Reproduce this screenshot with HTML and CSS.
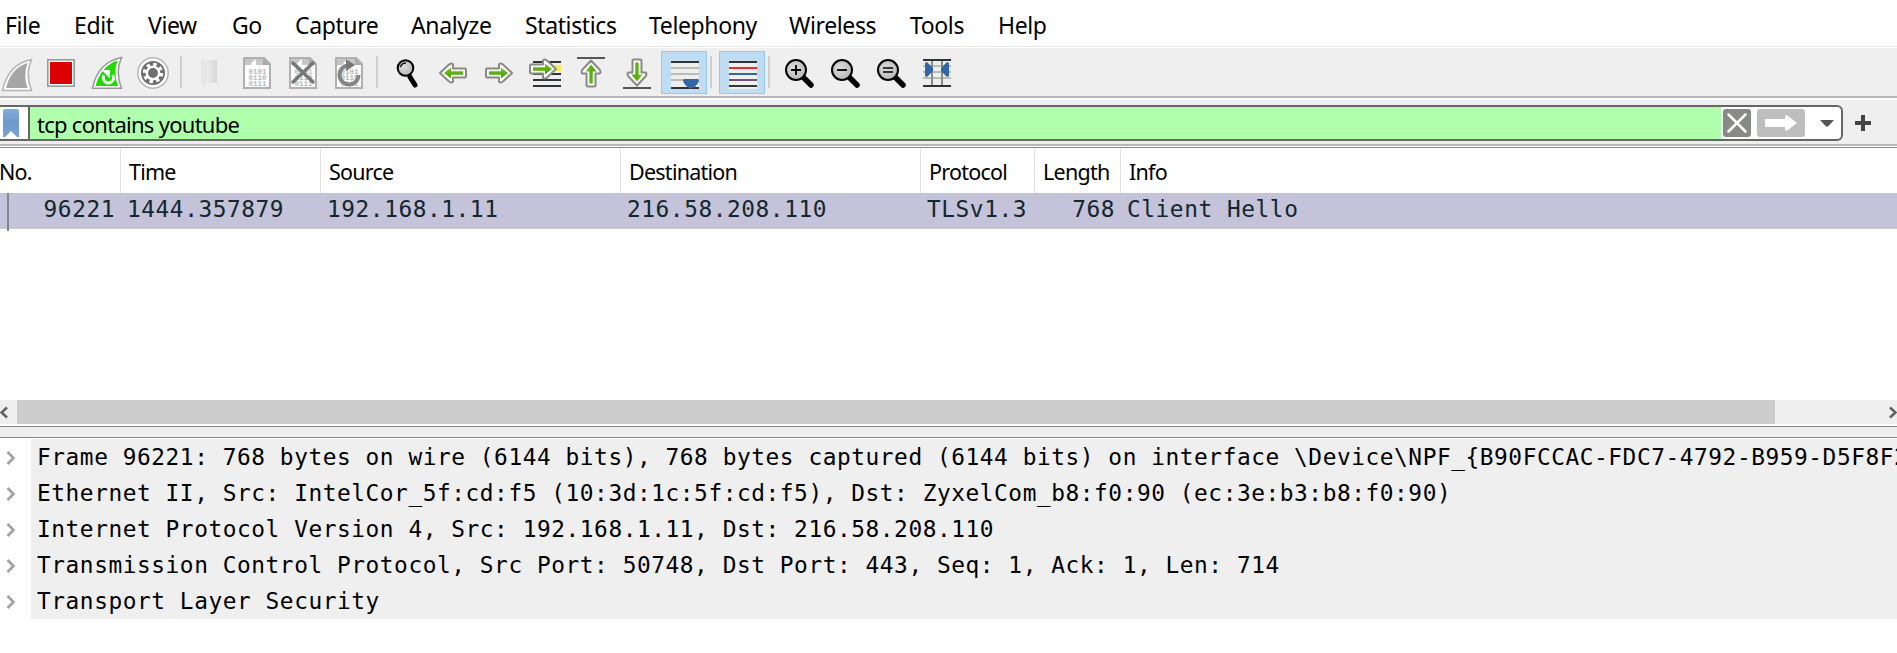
FILE: index.html
```html
<!DOCTYPE html>
<html lang="en">
<head>
<meta charset="utf-8">
<title>Packet capture</title>
<link rel="stylesheet" href="styles.css">
</head>
<body>
<svg class="defs" width="0" height="0">
  <defs>
    <linearGradient id="green" x1="0" y1="0" x2="0" y2="1"><stop offset="0" stop-color="#77c520"/><stop offset="1" stop-color="#459b00"/></linearGradient>
    <linearGradient id="blue" x1="0" y1="0" x2="0" y2="1"><stop offset="0" stop-color="#85acd9"/><stop offset=".5" stop-color="#6d99cc"/><stop offset="1" stop-color="#7aa4d4"/></linearGradient>
    <radialGradient id="lens" cx=".4" cy=".4" r=".6"><stop offset="0" stop-color="#ddd"/><stop offset="1" stop-color="#b8b8b8"/></radialGradient>
    <linearGradient id="folder"><stop offset="0" stop-color="#e6e6e6"/><stop offset=".4" stop-color="#e8e8e8"/><stop offset="1" stop-color="#d4d4d4"/></linearGradient>
    <g id="page">
      <path d="M1 1H21L27 7V31H1Z" fill="#fff" stroke="#b0b0b0" stroke-width="2"/>
      <path d="M2 2H20V8H2Z" fill="#c6c6c6"/><path d="M7 9Q9 4 13 2Q12 6 14 9Z" fill="#fff"/><path d="M20 1V8H27Z" fill="#a9a9a9"/>
      <g class="bits"><text x="5.500" y="16.500">0101</text><text x="5.500" y="22.500">0110</text><text x="5.500" y="28.500">0111</text></g>
    </g>
    <g id="glass">
      <path d="M18 18L26 26" stroke="#000" stroke-width="5.500" stroke-linecap="round"/>
      <circle cx="11" cy="11" r="10" fill="url(#lens)" stroke="#000" stroke-width="2"/>
    </g>
    <g id="arrow">
      <path d="M2 6H14V2Q15 0 18 2L27 10.500L18 19Q15 21 14 19V15H2Q1 15 1 14V7Q1 6 2 6Z" fill="#fff" stroke="#888a85" stroke-width="2" stroke-linejoin="round"/>
      <path d="M4 8.800H16V5L23 10.500L16 16V12.200H4Z" fill="url(#green)"/>
    </g>
  </defs>
</svg>

<nav class="menu">
  <span>File</span><span>Edit</span><span>View</span><span>Go</span><span>Capture</span><span>Analyze</span><span>Statistics</span><span>Telephony</span><span>Wireless</span><span>Tools</span><span>Help</span>
</nav>

<div class="toolbar">
  <svg class="first" viewBox="0 48 38 48"><path d="M2.500 90.500Q8 64 31.500 59.500Q25 74 31.500 90.500Z" fill="#fff" stroke="#b4b4b4" stroke-width="1.500"/><path d="M6 88Q11 68 27.500 63Q23 75 27.500 88Z" fill="#a6a6a6"/></svg>
  <svg viewBox="38 48 46 48"><rect x="47.800" y="59.800" width="26.400" height="26.400" fill="#fff" stroke="#999" stroke-width="1.600"/><rect x="50" y="62" width="22" height="22" fill="#dc0000"/></svg>
  <svg viewBox="84 48 46 48"><path d="M92.500 88.200Q98 62 121.500 57.500Q115 72 121.500 88.200Z" fill="#fff" stroke="#999" stroke-width="1.500"/><path d="M95.500 86Q101 66 117.500 60.500Q113 73 118 86Z" fill="#1edb00"/><path d="M104 75.500A5 5 0 1 0 112.500 75" fill="none" stroke="#fff" stroke-width="2.800"/><path d="M101.500 70H110V78.500Z" fill="#fff"/></svg>
  <svg viewBox="130 48 46 48"><circle cx="153" cy="73" r="15.200" fill="#fff" stroke="#b5b5b5" stroke-width="1.500"/><circle cx="153" cy="73" r="12" fill="#6e6e6e"/><circle cx="153" cy="73" r="8.500" fill="none" stroke="#fff" stroke-width="3.500" stroke-dasharray="3.400 3.275"/><circle cx="153" cy="73" r="6.200" fill="none" stroke="#fff" stroke-width="2.500"/></svg>
  <i class="sep s1"></i>
  <svg viewBox="187 48 46 48"><path d="M201 60H217V82L219 83H206L205 87L201 82Z" fill="url(#folder)"/><path d="M201 60L206 64V83L205 87L201 82Z" fill="#e6e6e6"/></svg>
  <svg viewBox="233 48 46 48"><use href="#page" x="243" y="57"/></svg>
  <svg viewBox="279 48 46 48"><use href="#page" x="289" y="57"/><path d="M293 63L313 82M313 63L293 82" stroke="#777" stroke-width="3.500" stroke-linecap="round"/></svg>
  <svg viewBox="325 48 46 48"><use href="#page" x="335" y="57"/><path d="M348 65.500A9.500 9.500 0 1 0 358.500 75" fill="none" stroke="#858585" stroke-width="4"/><path d="M346 59L355 65L346 71Z" fill="#777"/></svg>
  <i class="sep s2"></i>
  <svg viewBox="384 48 46 48"><path d="M410 77L415 85" stroke="#000" stroke-width="5" stroke-linecap="round"/><path d="M408 72L412 79" stroke="#000" stroke-width="2"/><circle cx="405.500" cy="68" r="7.800" fill="url(#lens)" stroke="#000" stroke-width="2"/><path d="M400.500 67Q401.500 63 406 63" fill="none" stroke="#111" stroke-width="1.400"/></svg>
  <svg viewBox="430 48 46 48"><use href="#arrow" transform="translate(467 62.500) scale(-1 1)"/></svg>
  <svg viewBox="476 48 46 48"><use href="#arrow" transform="translate(485 62.500)"/></svg>
  <svg viewBox="522 48 46 48"><path d="M533 62H561M533 74H561M533 80H561M533 86H561" stroke="#2e3436" stroke-width="2"/><path d="M550 65H561V71H550Z" fill="#fce94f"/><use href="#arrow" transform="translate(529 58.500)"/></svg>
  <svg viewBox="568 48 46 48"><path d="M577 58H605" stroke="#555753" stroke-width="2"/><use href="#arrow" transform="translate(580.500 87.500) rotate(-90)"/></svg>
  <svg viewBox="614 48 46 48"><path d="M623 88H651" stroke="#555753" stroke-width="2"/><use href="#arrow" transform="translate(647.500 58.500) rotate(90)"/></svg>
  <button class="on b1"><svg viewBox="661 48 46 48"><path d="M671 61H699V89H671Z" fill="#eeeeec"/><path d="M671 62H699M671 88H699" stroke="#2e3436" stroke-width="2"/><path d="M671 68H699M671 74H699M671 80H699" stroke="#babdb6" stroke-width="2"/><path d="M684 79H698Q700 80 698 83Q695 88 691 88.500Q687 88 684 83Q682 80 684 79Z" fill="#3465a4"/></svg></button>
  <i class="sep s3"></i>
  <button class="on"><svg viewBox="719 48 46 48"><path d="M729 61H757V89H729Z" fill="#eeeeec"/><path d="M729 62H757" stroke="#2e3436" stroke-width="2"/><path d="M729 68H757" stroke="#ef2929" stroke-width="2"/><path d="M729 74H757" stroke="#3465a4" stroke-width="2"/><path d="M729 80H757" stroke="#75507b" stroke-width="2"/><path d="M729 86H757" stroke="#2e3b36" stroke-width="2"/></svg></button>
  <i class="sep s4"></i>
  <svg viewBox="776 48 46 48"><use href="#glass" x="785" y="59"/><path d="M791 70H801M796 65V75" stroke="#000" stroke-width="1.800"/></svg>
  <svg viewBox="822 48 46 48"><use href="#glass" x="831" y="59"/><path d="M837 70H847" stroke="#000" stroke-width="1.800"/></svg>
  <svg viewBox="868 48 46 48"><use href="#glass" x="877" y="59"/><path d="M883 68H893M883 72H893" stroke="#000" stroke-width="1.700"/></svg>
  <svg viewBox="914 48 46 48"><path d="M923 60H951V86H923Z" fill="#eeeeec"/><path d="M923 66H951M923 72H951M923 78H951" stroke="#babdb6" stroke-width="2"/><path d="M923 60H951M923 86H951" stroke="#2e3436" stroke-width="2"/><path d="M932 61V85M942 61V85" stroke="#888a85" stroke-width="2"/><path d="M925 63L927 62L933 68V71L927 77L925 76ZM949 63L947 62L941 68V71L947 77L949 76Z" fill="#3465a4"/></svg>
</div>

<div class="filterbar">
  <div class="filter">
    <span class="bookmark"><svg width="16" height="28" viewBox="0 0 16 28"><path d="M0 2Q0 0 2 0H14Q16 0 16 2V28H14L8 22L2 28H0Z" fill="url(#blue)"/></svg></span>
    <span class="query">tcp contains youtube</span>
    <span class="actions">
      <svg width="28" height="28" viewBox="0 0 28 28"><rect width="28" height="28" rx="3" fill="#888a85"/><path d="M5.500 5.500L22.500 22.500M22.500 5.500L5.500 22.500" stroke="#fff" stroke-width="2.500" stroke-linecap="round"/></svg>
      <svg width="48" height="28" viewBox="0 0 48 28"><rect width="48" height="28" rx="3" fill="#bebebe"/><path d="M9 10H28V7Q29 5.500 31 7L40 14L31 21Q29 22.500 28 21V18H9Q8 18 8 17V11Q8 10 9 10Z" fill="#fff"/></svg>
      <svg class="drop" width="14" height="7" viewBox="0 0 14 7"><path d="M0 0H14L8 6.500H6Z" fill="#555753"/></svg>
    </span>
  </div>
  <svg class="plus" width="16" height="16" viewBox="0 0 16 16"><path d="M0 8H16M8 0V16" stroke="#444" stroke-width="4"/></svg>
</div>

<section class="packets">
  <div class="row head"><span>No.</span><span>Time</span><span>Source</span><span>Destination</span><span>Protocol</span><span>Length</span><span>Info</span></div>
  <div class="row packet"><span class="num">96221</span><span>1444.357879</span><span>192.168.1.11</span><span>216.58.208.110</span><span>TLSv1.3</span><span class="num">768</span><span>Client Hello</span></div>
</section>

<div class="scroll">
  <svg width="17" height="24" viewBox="0 0 17 24"><path d="M7 7.500L1.500 12.500L7 17.500" fill="none" stroke="#606060" stroke-width="2.500"/></svg>
  <div class="thumb"></div>
  <svg width="10" height="24" viewBox="0 0 10 24"><path d="M3 7.500L8.500 12.500L3 17.500" fill="none" stroke="#606060" stroke-width="2.500"/></svg>
</div>
<div class="splitter"></div>

<section class="details">
  <div class="node"><svg viewBox="0 0 31 36"><path d="M7.500 13L13.500 19L7.500 25"/></svg><span>Frame 96221: 768 bytes on wire (6144 bits), 768 bytes captured (6144 bits) on interface \Device\NPF_{B90FCCAC-FDC7-4792-B959-D5F8F2</span></div>
  <div class="node"><svg viewBox="0 0 31 36"><path d="M7.500 13L13.500 19L7.500 25"/></svg><span>Ethernet II, Src: IntelCor_5f:cd:f5 (10:3d:1c:5f:cd:f5), Dst: ZyxelCom_b8:f0:90 (ec:3e:b3:b8:f0:90)</span></div>
  <div class="node"><svg viewBox="0 0 31 36"><path d="M7.500 13L13.500 19L7.500 25"/></svg><span>Internet Protocol Version 4, Src: 192.168.1.11, Dst: 216.58.208.110</span></div>
  <div class="node"><svg viewBox="0 0 31 36"><path d="M7.500 13L13.500 19L7.500 25"/></svg><span>Transmission Control Protocol, Src Port: 50748, Dst Port: 443, Seq: 1, Ack: 1, Len: 714</span></div>
  <div class="node"><svg viewBox="0 0 31 36"><path d="M7.500 13L13.500 19L7.500 25"/></svg><span>Transport Layer Security</span></div>
</section>
</body>
</html>
```
FILE: styles.css
```css
* { box-sizing: border-box; }
body { margin: 0; height: 653px; overflow: hidden; background: #fff; color: #000; font-family: "Noto Sans", "Open Sans", sans-serif; }
svg { display: block; flex: none; }
.defs { height: 0; }

.menu { display: grid; grid-template-columns: 69px 74px 84px 63px 116px 114px 124px 140px 121px 88px 80px; height: 46px; padding-left: 5px; line-height: 51px; font-size: 23px; letter-spacing: -.38px; white-space: nowrap; }

.toolbar { display: flex; height: 54px; padding-top: 1px; border-top: 1px solid #ebebeb; background: #efefef; box-shadow: inset 0 1px #fff, inset 0 -2px #fff, inset 0 -4px #b5b5b5; }
.toolbar svg { width: 46px; height: 48px; }
.toolbar .first { width: 38px; }
.sep { width: 2px; height: 32px; margin-top: 8px; background: #cfcfcf; }
.s1 { margin-left: 4px; margin-right: 5px; }
.s2 { margin-left: 5px; margin-right: 6px; }
.s3 { margin-left: 3px; margin-right: 7px; }
.s4 { margin-left: 3px; margin-right: 6px; }
.on { width: 46px; height: 43px; margin: 3px 0 0; padding: 0; border: 0; overflow: hidden; background: #c0dcf3; box-shadow: inset 0 0 0 1px #90c8f6; }
.on svg { margin-top: -3px; }
.b1 { margin-left: 1px; }
.bits { font: bold 7.500px "Liberation Mono", monospace; fill: #b8b8b8; }

.filterbar { display: flex; align-items: flex-start; height: 48px; padding-top: 5px; background: #efefef; border-bottom: 1px solid #85858f; box-shadow: inset 0 -1px #fff, inset 0 -3px #b9b6b9; }
.filter { display: flex; align-items: stretch; width: 1843px; height: 36px; border: 2px solid #666; border-left: 0; border-radius: 0 6px 6px 0; background: #fff; }
.bookmark { width: 30px; padding: 2px 0 0 3px; border-right: 2px solid #666; }
.query { flex: 1; padding-left: 7px; background: #afffac; font-size: 22px; line-height: 34px; letter-spacing: -.72px; }
.actions { display: flex; gap: 6px; width: 120px; padding: 2px 0 0 2px; }
.drop { margin: 11px 0 0 9px; }
.plus { margin: 10px 0 0 12px; }

.packets { height: 252px; }
.row { display: grid; grid-template-columns: 121px 200px 300px 300px 114px 86px 1fr; white-space: nowrap; }
.head { height: 45px; font-size: 21.500px; line-height: 46px; letter-spacing: -.75px; padding-top: 1px; }
.head span { height: 44px; padding-left: 8px; border-right: 1px solid #e2e2e2; }
.head span:first-child { padding-left: 0; margin-left: -1px; }
.head span:last-child { border: 0; }
.packet { height: 36px; background: #c5c3d9; color: #12272e; font: 22.800px/33px "DejaVu Sans Mono", monospace; letter-spacing: .56px; }
.packet span { padding-left: 6px; }
.packet .num { text-align: right; padding: 0 6px 0 0; }
.packet span:first-child { height: 38px; margin-left: 7px; border-left: 2px solid #7d8888; }

.scroll { display: flex; justify-content: space-between; height: 24px; background: #efefef; }
.thumb { width: 1758px; margin-right: auto; background: #cdcdcd; }
.splitter { height: 12px; margin: 2px 0 1px; border: 1px solid #85858f; border-width: 1px 0; background: #efefef; }

.details { font: 22.800px/36px "DejaVu Sans Mono", monospace; letter-spacing: .56px; }
.node { display: flex; height: 36px; white-space: pre; }
.node svg { width: 31px; height: 36px; fill: none; stroke: #a0a0a0; stroke-width: 2.500; }
.node span { flex: 1; min-width: 0; overflow: hidden; padding-left: 6px; background: #efefef; }
```
